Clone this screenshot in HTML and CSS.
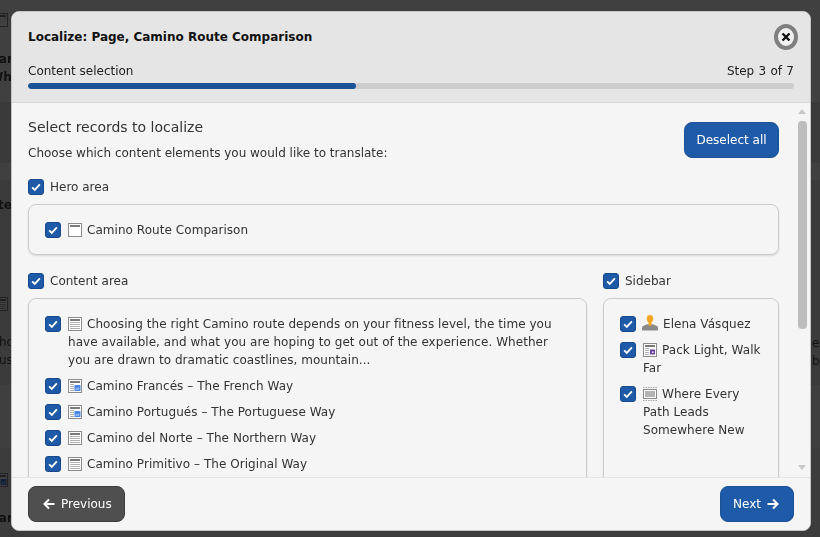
FILE: index.html
```html
<!DOCTYPE html>
<html lang="en">
<head>
    <meta charset="UTF-8">
    <meta name="viewport" content="width=device-width, initial-scale=1.0">
    <title>Localize: Page, Camino Route Comparison</title>
    <link rel="stylesheet" href="styles.css">
</head>
<body>
    <svg class="icon-defs" width="0" height="0" aria-hidden="true">
        <symbol id="check" viewBox="0 0 16 16">
            <path d="M3.600 8.400l3 2.900 5.800-6.200" fill="none" stroke="#fff" stroke-width="2.100"/>
        </symbol>
        <symbol id="header" viewBox="0 0 14 14">
            <rect x=".5" y=".5" width="13" height="13" fill="#fff" stroke="#8c8c8c"/>
            <rect x="2" y="2" width="10" height="2" fill="#7a7a7a"/>
        </symbol>
        <symbol id="text" viewBox="0 0 14 14">
            <rect x=".5" y=".5" width="13" height="13" fill="#fff" stroke="#8c8c8c"/>
            <rect x="2" y="2" width="10" height="2" fill="#7a7a7a"/>
            <path d="M2 5.500h10M2 7.500h10M2 9.500h10M2 11.500h10" stroke="#b0b0b0"/>
        </symbol>
        <symbol id="textpic" viewBox="0 0 14 14">
            <rect x=".5" y=".5" width="13" height="13" fill="#fff" stroke="#8c8c8c"/>
            <rect x="2" y="2" width="10" height="2" fill="#7a7a7a"/>
            <path d="M2 5.500h4M2 7.500h4M2 9.500h4M2 11.500h4" stroke="#b0b0b0"/>
            <rect x="6.500" y="6" width="6" height="6" fill="#4d87e8"/>
            <path d="M7.500 11l1.500-1.500 1 1 1-1.500" stroke="#fff" fill="none" stroke-width=".7"/>
        </symbol>
        <symbol id="news" viewBox="0 0 14 14">
            <rect x=".5" y=".5" width="13" height="13" fill="#fff" stroke="#8c8c8c"/>
            <rect x="2" y="2" width="10" height="2" fill="#7a7a7a"/>
            <path d="M2 5.500h4M2 7.500h4M2 9.500h4M2 11.500h4" stroke="#b0b0b0"/>
            <rect x="7" y="6.500" width="5" height="5" fill="#6b3fa0"/>
            <rect x="9" y="8.500" width="1.500" height="1.500" fill="#fff"/>
        </symbol>
        <symbol id="banner" viewBox="0 0 14 14">
            <path d="M0 .5h14M0 13.500h14" stroke="#a8a8a8" stroke-dasharray="1.500 1"/>
            <rect x=".5" y="2.500" width="13" height="9" fill="#fff" stroke="#8c8c8c"/>
            <rect x="2" y="4" width="10" height="6" fill="#b4b4b4"/>
        </symbol>
        <symbol id="user" viewBox="0 0 16 16">
            <path d="M0 15.500v-3c0-1.500 3-2.500 5.500-3.300h5c2.500.8 5.500 1.800 5.500 3.300v3z" fill="#8a8a8a"/>
            <path d="M8 0c2.200 0 3.200 1.500 3.200 3.500 0 2-1 3.500-1.700 4.200v2.300L8 11.200 6.500 10V7.700C5.800 7 4.800 5.500 4.800 3.500 4.800 1.500 5.800 0 8 0z" fill="#f5a623"/>
        </symbol>
    </svg>

    <div class="backdrop">
        <svg class="ghost ghost-icon icon-a"><use href="#header"/></svg>
        <svg class="ghost ghost-icon icon-b"><use href="#text"/></svg>
        <svg class="ghost ghost-icon icon-c"><use href="#textpic"/></svg>
        <span class="ghost ghost-a">Car<br>Wh</span>
        <span class="ghost ghost-b">ate</span>
        <span class="ghost ghost-c">ho<br>us</span>
        <span class="ghost ghost-d">Car</span>
        <span class="ghost ghost-e">es<br>b</span>
    </div>

    <div class="modal">
        <header class="modal-header">
            <div class="title-row">
                <h1>Localize: Page, Camino Route Comparison</h1>
                <button class="close" aria-label="Close">
                    <svg width="10" height="10" viewBox="0 0 10 10"><path d="M1.500 1.500l7 7M8.500 1.500l-7 7" stroke="#111" stroke-width="2.400"/></svg>
                </button>
            </div>
            <div class="step-row">
                <span>Content selection</span>
                <span class="step-count">Step 3 of 7</span>
            </div>
            <div class="progress"><div class="progress-bar" style="width: 42.8%"></div></div>
        </header>

        <div class="modal-body">
            <div class="scroll-content">
                <div class="intro">
                    <div>
                        <h2>Select records to localize</h2>
                        <p>Choose which content elements you would like to translate:</p>
                    </div>
                    <button class="btn btn-primary">Deselect all</button>
                </div>

                <label class="check-row area-label">
                    <svg class="check"><use href="#check"/></svg>
                    <span>Hero area</span>
                </label>
                <div class="panel panel-hero">
                    <div class="check-row">
                        <svg class="check"><use href="#check"/></svg>
                        <span class="record"><svg class="rec-icon"><use href="#header"/></svg>Camino Route Comparison</span>
                    </div>
                </div>

                <div class="columns">
                    <div class="col-main">
                        <label class="check-row area-label">
                            <svg class="check"><use href="#check"/></svg>
                            <span>Content area</span>
                        </label>
                        <div class="panel panel-tall">
                            <div class="check-row">
                                <svg class="check"><use href="#check"/></svg>
                                <span class="record"><svg class="rec-icon"><use href="#text"/></svg>Choosing the right Camino route depends on your fitness level, the time you have available, and what you are hoping to get out of the experience. Whether you are drawn to dramatic coastlines, mountain...</span>
                            </div>
                            <div class="check-row">
                                <svg class="check"><use href="#check"/></svg>
                                <span class="record"><svg class="rec-icon"><use href="#textpic"/></svg>Camino Francés – The French Way</span>
                            </div>
                            <div class="check-row">
                                <svg class="check"><use href="#check"/></svg>
                                <span class="record"><svg class="rec-icon"><use href="#textpic"/></svg>Camino Portugués – The Portuguese Way</span>
                            </div>
                            <div class="check-row">
                                <svg class="check"><use href="#check"/></svg>
                                <span class="record"><svg class="rec-icon"><use href="#text"/></svg>Camino del Norte – The Northern Way</span>
                            </div>
                            <div class="check-row">
                                <svg class="check"><use href="#check"/></svg>
                                <span class="record"><svg class="rec-icon"><use href="#text"/></svg>Camino Primitivo – The Original Way</span>
                            </div>
                        </div>
                    </div>
                    <div class="col-side">
                        <label class="check-row area-label">
                            <svg class="check"><use href="#check"/></svg>
                            <span>Sidebar</span>
                        </label>
                        <div class="panel panel-tall">
                            <div class="check-row">
                                <svg class="check"><use href="#check"/></svg>
                                <span class="record"><svg class="rec-icon user-icon"><use href="#user"/></svg>Elena Vásquez</span>
                            </div>
                            <div class="check-row">
                                <svg class="check"><use href="#check"/></svg>
                                <span class="record"><svg class="rec-icon"><use href="#news"/></svg>Pack Light, Walk Far</span>
                            </div>
                            <div class="check-row">
                                <svg class="check"><use href="#check"/></svg>
                                <span class="record"><svg class="rec-icon"><use href="#banner"/></svg>Where Every Path Leads Somewhere New</span>
                            </div>
                        </div>
                    </div>
                </div>
            </div>

            <div class="scrollbar">
                <span class="arrow-up"></span>
                <span class="thumb"></span>
                <span class="arrow-down"></span>
            </div>
        </div>

        <footer class="modal-footer">
            <button class="btn btn-dark btn-prev">
                <svg width="12" height="12" viewBox="0 0 12 12"><path d="M11.500 6H1.500M6 1.500L1.500 6 6 10.500" fill="none" stroke="#fff" stroke-width="2"/></svg>
                Previous
            </button>
            <button class="btn btn-primary btn-next">
                Next
                <svg width="12" height="12" viewBox="0 0 12 12"><path d="M.5 6h10M6 1.500L10.500 6 6 10.500" fill="none" stroke="#fff" stroke-width="2"/></svg>
            </button>
        </footer>
    </div>
</body>
</html>
```

FILE: styles.css
```css
* {
    box-sizing: border-box;
}
html, body {
    height: 100%;
}
body {
    margin: 0;
    padding: 11px 9px 6px 11px;
    background: #3f3f3f;
    font-family: "DejaVu Sans", sans-serif;
    font-size: 12px;
    line-height: 18px;
    color: #333;
    overflow: hidden;
}
.icon-defs {
    position: absolute;
}
h1, h2, p {
    margin: 0;
}

/* page behind the modal */
.backdrop {
    position: fixed;
    inset: 0;
    background: linear-gradient(#404040 102px, #3a3a3a 102px 163px, #404040 163px 180px, #3b3b3b 180px 385px, #3f3f3f 385px 448px, #3c3c3c 448px);
}
.ghost {
    position: absolute;
    color: #111;
    white-space: nowrap;
}
.ghost-a { left: -10px; top: 50px; font-weight: 700; }
.ghost-b { left: -10px; top: 196px; font-weight: 700; }
.ghost-c { left: -1px; top: 333px; }
.ghost-d { left: -10px; top: 509px; font-weight: 700; }
.ghost-e { left: 812px; top: 334px; }
.ghost-icon {
    left: -6px;
    width: 14px;
    height: 14px;
    filter: brightness(0.25);
}
.icon-a { top: 13px; }
.icon-b { top: 297px; }
.icon-c { top: 473px; }

.modal {
    position: relative;
    display: flex;
    flex-direction: column;
    height: 520px;
    background: #f5f5f5;
    border: 1px solid #c4c4c4;
    border-radius: 8px;
    overflow: hidden;
}
.modal-header {
    flex: none;
    height: 91px;
    padding: 0 16px;
    background: #e5e5e5;
    border-bottom: 1px solid #d7d7d7;
}
.title-row {
    display: flex;
    justify-content: space-between;
    align-items: center;
    height: 50px;
}
h1 {
    font-size: 12px;
    font-weight: 700;
    color: #111;
}
.close {
    display: flex;
    align-items: center;
    justify-content: center;
    width: 24px;
    height: 26px;
    margin-right: -4px;
    padding: 0;
    background: #f0f0f0;
    border: 4px solid #7f7f7f;
    border-radius: 50%;
}
.step-row {
    display: flex;
    justify-content: space-between;
    color: #222;
}
.step-count {
    word-spacing: 0.5px;
}
.progress {
    height: 6px;
    margin-top: 3px;
    background: #ccc;
    border-radius: 3px;
    overflow: hidden;
}
.progress-bar {
    height: 100%;
    background: #1c5296;
    border-radius: 3px;
}

.modal-body {
    flex: 1;
    min-height: 0;
    display: flex;
    overflow: hidden;
}
.scroll-content {
    flex: 1;
    min-width: 0;
    padding: 15px 16px 0;
}
.intro {
    display: flex;
    justify-content: space-between;
    align-items: flex-start;
    height: 61px;
}
h2 {
    font-size: 14px;
    font-weight: 400;
    line-height: 18px;
}
.intro p {
    margin-top: 8px;
}
.intro .btn {
    justify-content: center;
    width: 95px;
    margin-top: 4px;
    padding: 0;
}

.check-row {
    display: flex;
    align-items: flex-start;
    gap: 7px;
}
.check {
    flex: none;
    width: 16px;
    height: 16px;
    background: #1f5aa8;
    border: 1px solid #174a8c;
    border-radius: 3px;
}
.area-label {
    gap: 6px;
    height: 16px;
    line-height: 16px;
}
.panel {
    display: flex;
    flex-direction: column;
    gap: 8px;
    margin-top: 9px;
    padding: 17px 16px;
    background: #f5f5f5;
    border: 1px solid #ccc;
    border-radius: 8px;
    box-shadow: 0 1px 2px rgba(0, 0, 0, 0.12);
}
.panel-hero {
    height: 51px;
}
.col-main .panel {
    padding-right: 20px;
}
.record {
    min-width: 0;
    margin: -1px 0 1px;
    letter-spacing: 0.05px;
}
.rec-icon {
    width: 14px;
    height: 14px;
    margin-right: 5px;
    vertical-align: -3px;
}
.user-icon {
    width: 16px;
    height: 16px;
    margin-left: -1px;
}
.columns {
    display: grid;
    grid-template-columns: 1fr 176px;
    gap: 16px;
    margin-top: 18px;
}
.panel-tall {
    height: 300px;
}

.scrollbar {
    flex: none;
    position: relative;
    width: 15px;
}
.thumb {
    position: absolute;
    left: 3px;
    top: 18px;
    width: 9px;
    height: 208px;
    background: #bdbdbd;
    border-radius: 4px;
}
.arrow-up, .arrow-down {
    position: absolute;
    left: 3px;
    width: 0;
    height: 0;
    border-left: 4.500px solid transparent;
    border-right: 4.500px solid transparent;
}
.arrow-up {
    top: 6px;
    border-bottom: 5px solid #c8c8c8;
}
.arrow-down {
    bottom: 7px;
    border-top: 5px solid #c8c8c8;
}

.modal-footer {
    flex: none;
    display: flex;
    justify-content: space-between;
    align-items: center;
    height: 53px;
    padding: 0 16px;
    background: #f5f5f5;
    border-top: 1px solid #e4e4e4;
}
.btn {
    display: inline-flex;
    align-items: center;
    gap: 6px;
    height: 36px;
    font: inherit;
    border-radius: 8px;
    color: #fff;
}
.btn-prev {
    padding: 0 12px 0 14px;
}
.btn-next {
    padding: 0 14px 0 12px;
}
.btn-primary {
    background: #1f5aa8;
    border: 1px solid #1c5296;
}
.btn-dark {
    background: #4f4f4f;
    border: 1px solid #3c3c3c;
}
```
